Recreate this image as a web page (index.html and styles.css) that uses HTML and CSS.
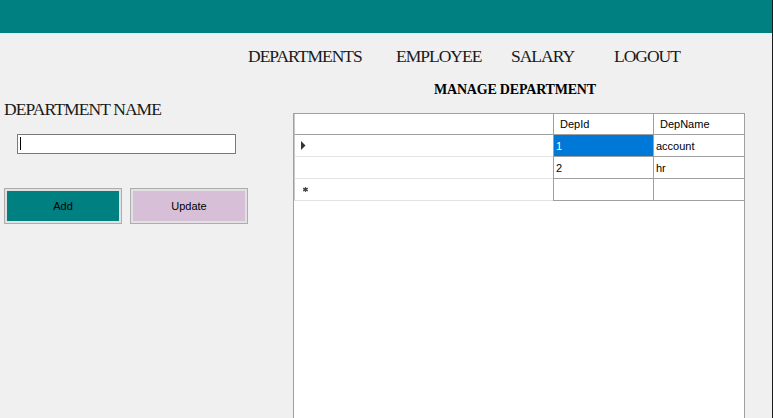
FILE: index.html
```html
<!DOCTYPE html>
<html lang="en">
<head>
<meta charset="utf-8">
<title>Manage Department</title>
<link rel="stylesheet" href="styles.css">
</head>
<body>
<div class="window">
  <header class="topbar"></header>
  <nav class="nav">
    <a class="nav-item">DEPARTMENTS</a>
    <a class="nav-item">EMPLOYEE</a>
    <a class="nav-item">SALARY</a>
    <a class="nav-item">LOGOUT</a>
  </nav>
  <main class="content">
    <section class="form-panel">
      <label class="field-label">DEPARTMENT NAME</label>
      <div class="name-input" role="textbox"><span class="caret"></span></div>
      <div class="actions">
        <button class="btn btn-add">Add</button>
        <button class="btn btn-update">Update</button>
      </div>
    </section>
    <section class="table-panel">
      <h1 class="panel-title">MANAGE DEPARTMENT</h1>
      <div class="grid">
        <div class="row head">
          <div class="cell rh"></div>
          <div class="cell col">DepId</div>
          <div class="cell col">DepName</div>
        </div>
        <div class="row">
          <div class="cell rh"><svg class="marker" width="5" height="9" viewBox="0 0 5 9"><polygon points="0,0 4.5,4.5 0,9" fill="#333"/></svg></div>
          <div class="cell data selected">1</div>
          <div class="cell data">account</div>
        </div>
        <div class="row">
          <div class="cell rh"></div>
          <div class="cell data">2</div>
          <div class="cell data">hr</div>
        </div>
        <div class="row">
          <div class="cell rh"><svg class="star" width="5" height="5" viewBox="0 0 5 5"><path d="M2.5 0V5M0 1.2L5 3.8M0 3.8L5 1.2" stroke="#555" stroke-width="1.3"/><circle cx="2.5" cy="2.5" r="1.4" fill="#444"/></svg></div>
          <div class="cell data"></div>
          <div class="cell data"></div>
        </div>
      </div>
    </section>
  </main>
</div>
</body>
</html>
```
FILE: styles.css
```css
html, body {
  margin: 0;
  padding: 0;
}

body {
  background: #f0f0f0;
  font-family: "Liberation Sans", Arial, sans-serif;
}

.window {
  width: 773px;
  height: 418px;
  box-sizing: border-box;
  border-right: 1px solid #1c1c1c;
  display: flex;
  flex-direction: column;
  overflow: hidden;
  background: #f0f0f0;
}

.topbar {
  flex: none;
  height: 33px;
  background: #008080;
}

.nav {
  flex: none;
  display: grid;
  grid-template-columns: 148px 115px 103px auto;
  padding: 14px 0 0 248px;
  height: 19px;
  font-family: "Liberation Serif", "Times New Roman", serif;
  font-size: 17.5px;
  line-height: 19px;
  letter-spacing: -1px;
  color: #1a1a1a;
}

.nav-item {
  white-space: nowrap;
}

.content {
  flex: 1;
  display: flex;
  min-height: 0;
}

.form-panel {
  flex: none;
  width: 293px;
  box-sizing: border-box;
  padding-top: 33px;
  display: flex;
  flex-direction: column;
}

.field-label {
  display: block;
  padding-left: 4px;
  font-family: "Liberation Serif", "Times New Roman", serif;
  font-size: 17.5px;
  line-height: 20px;
  letter-spacing: -0.9px;
  color: #1a1a1a;
}

.name-input {
  margin: 15px 0 0 17px;
  width: 219px;
  height: 20px;
  box-sizing: border-box;
  border: 1px solid #7a7a7a;
  background: #fff;
  padding: 2px 0 0 2px;
}

.caret {
  display: block;
  width: 1px;
  height: 13px;
  background: #000;
}

.actions {
  display: flex;
  gap: 8px;
  margin-top: 34px;
  padding-left: 4px;
}

.btn {
  width: 118px;
  height: 36px;
  box-sizing: border-box;
  border: 1px solid #adadad;
  box-shadow: inset 0 0 0 2px #e1e1e1;
  padding: 0;
  font-family: "Liberation Sans", Arial, sans-serif;
  font-size: 11px;
  color: #000;
}

.btn-add {
  background: #008080;
}

.btn-update {
  background: #d8bfd8;
}

.table-panel {
  flex: 1;
  display: flex;
  flex-direction: column;
  padding-top: 16px;
  min-width: 0;
}

.panel-title {
  margin: 0;
  padding-left: 141px;
  font-family: "Liberation Serif", "Times New Roman", serif;
  font-weight: bold;
  font-size: 14px;
  line-height: 16px;
  letter-spacing: -0.2px;
  color: #000;
}

.grid {
  flex: 1;
  margin-top: 15px;
  width: 452px;
  box-sizing: border-box;
  border: 1px solid #a0a0a0;
  border-bottom: none;
  background: #fff;
}

.row {
  display: grid;
  grid-template-columns: 259px 100px 91px;
  height: 22px;
}

.row.head {
  height: 21px;
}

.cell {
  box-sizing: border-box;
  display: flex;
  align-items: center;
  border-bottom: 1px solid #a0a0a0;
  font-size: 11px;
  color: #000;
  white-space: nowrap;
}

.rh {
  padding-left: 6px;
  border-left: 1px solid #c8c8c8;
  border-bottom-color: #e3e3e3;
}

.head .rh {
  border-left-color: #c8c8c8;
  border-bottom-color: #a0a0a0;
}

.col,
.data {
  border-left: 1px solid #a0a0a0;
}

.col {
  padding-left: 6px;
}

.data {
  padding-left: 2px;
}

.selected {
  background: #0078d7;
  color: #fff;
}

.star {
  margin-left: 2px;
}
```
